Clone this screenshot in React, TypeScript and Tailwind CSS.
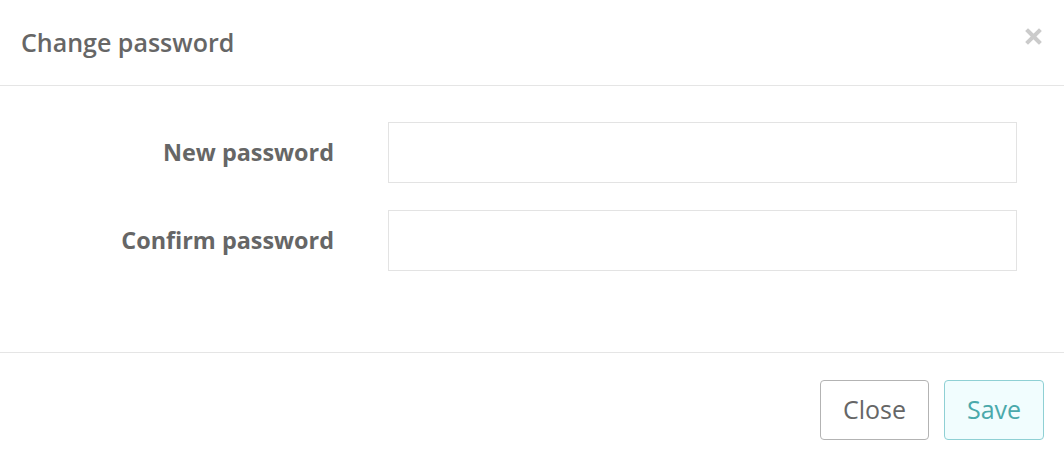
import { useState } from 'react'

export default function App() {
  const [newPassword, setNewPassword] = useState('')
  const [confirmPassword, setConfirmPassword] = useState('')

  return (
    <div className="h-[456px] w-[1064px] bg-white font-['Open_Sans',sans-serif] text-[#666]">
      <div className="flex h-[86px] items-center justify-between border-b border-[#e5e5e5] pl-[21px] pr-[22px]">
        <h1 className="text-[25px] font-semibold leading-none text-[#666]">Change password</h1>
        <button className="mb-[12px] text-[#cbcbcb]">
          <svg width="17" height="17" viewBox="0 0 17 17" fill="none" stroke="currentColor" strokeWidth="4" strokeLinecap="square">
            <path d="M3 3L14 14M14 3L3 14" />
          </svg>
        </button>
      </div>

      <div className="flex h-[267px] flex-col gap-[27px] border-b border-[#e5e5e5] pt-[36px]">
        <div className="flex items-center">
          <label className="w-[334px] text-right text-[23.4px] font-bold text-[#666]">New password</label>
          <input
            type="password"
            value={newPassword}
            onChange={(e) => setNewPassword(e.target.value)}
            className="ml-[54px] h-[61px] w-[629px] border border-[#e3e3e3] px-3 outline-none"
          />
        </div>
        <div className="flex items-center">
          <label className="w-[334px] text-right text-[23.4px] font-bold text-[#666]">Confirm password</label>
          <input
            type="password"
            value={confirmPassword}
            onChange={(e) => setConfirmPassword(e.target.value)}
            className="ml-[54px] h-[61px] w-[629px] border border-[#e3e3e3] px-3 outline-none"
          />
        </div>
      </div>

      <div className="flex justify-end gap-[15px] pr-[20px] pt-[27px]">
        <button className="h-[60px] w-[109px] rounded-[4px] border border-[#b3b3b3] bg-white text-[25px] text-[#666]">
          Close
        </button>
        <button className="h-[60px] w-[100px] rounded-[4px] border border-[#8fd0d4] bg-[#f1fdfe] text-[25px] text-[#4aa9ab]">
          Save
        </button>
      </div>
    </div>
  )
}
